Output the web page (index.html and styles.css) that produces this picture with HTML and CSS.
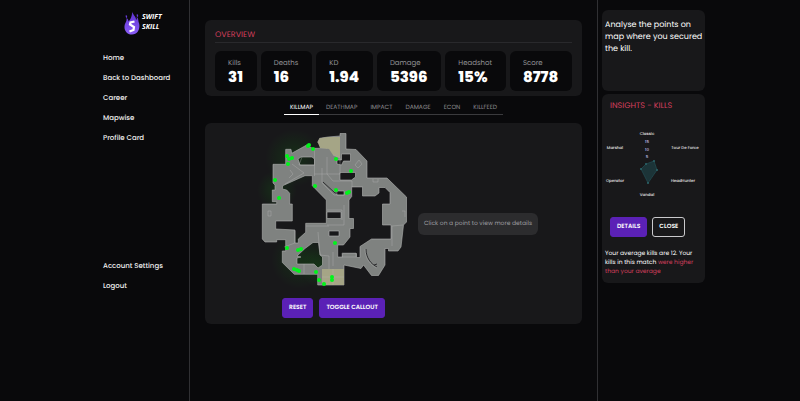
FILE: index.html
```html
<!DOCTYPE html>
<html lang="en">
<head>
    <meta charset="UTF-8">
    <meta name="viewport" content="width=device-width, initial-scale=1.0">
    <title>Swift Skill</title>
    <link rel="stylesheet" href="styles.css">
</head>
<body>
    <!-- Left Navigation Bar -->
    <nav class="left-nav">
        <a href="#" class="logo">
            <svg class="flame" viewBox="0 0 16 24" aria-hidden="true">
                <defs>
                    <linearGradient id="flame-fill" x1="0" y1="0" x2="0" y2="1">
                        <stop offset="0" stop-color="#5b2fd0"/>
                        <stop offset="1" stop-color="#8a5cf6"/>
                    </linearGradient>
                </defs>
                <path fill="url(#flame-fill)" d="M8 0C8 3 12 5 12 9C13 8 13 7 12.500 5.500C15 8 14 10 15 12C16.500 17 14 23.500 8 23.500C2 23.500 -.5 18 .8 13.500C1.500 11 3 10 2.500 7C4 8 4.500 9 4.500 10.500C7 8 8.500 4 8 0ZM2 4C3.500 5 3.500 6 2.500 7C1.500 6 1.500 5 2 4ZM13 3C14.500 4 14.500 5 13.500 6C12.500 5 12.500 4 13 3Z"/>
                <path fill="none" stroke="#fff" stroke-width="2.200" d="M10.500 10.500L6.500 11.500L6 13.500L10 16L9.500 19L5.500 20.500"/>
            </svg>
            <span class="logo-text">SWIFT<br>SKILL</span>
        </a>
        <ul>
            <li><a href="#">Home</a></li>
            <li><a href="#">Back to Dashboard</a></li>
            <li><a href="#">Career</a></li>
            <li><a href="#">Mapwise</a></li>
            <li><a href="#">Profile Card</a></li>
        </ul>
        <ul class="account-links">
            <li><a href="#">Account Settings</a></li>
            <li><a href="#">Logout</a></li>
        </ul>
    </nav>

    <!-- Main Content -->
    <main class="main-content">
        <section class="panel overview">
            <h2>OVERVIEW</h2>
            <div class="stats">
                <div class="stat"><span>Kills</span><strong>31</strong></div>
                <div class="stat"><span>Deaths</span><strong>16</strong></div>
                <div class="stat"><span>KD</span><strong>1.94</strong></div>
                <div class="stat"><span>Damage</span><strong>5396</strong></div>
                <div class="stat"><span>Headshot</span><strong>15%</strong></div>
                <div class="stat"><span>Score</span><strong>8778</strong></div>
            </div>
        </section>

        <div class="tabs">
            <button class="active">KILLMAP</button>
            <button>DEATHMAP</button>
            <button>IMPACT</button>
            <button>DAMAGE</button>
            <button>ECON</button>
            <button>KILLFEED</button>
        </div>

        <section class="panel map-panel">
            <div class="map-column">
                <svg class="map" viewBox="249 129 169 160" role="img" aria-label="Kill map">
                    <defs>
                        <radialGradient id="glow">
                            <stop offset="0" stop-color="#0f0" stop-opacity=".1"/>
                            <stop offset="1" stop-color="#0f0" stop-opacity="0"/>
                        </radialGradient>
                    </defs>
                    <circle cx="294" cy="158" r="29" fill="url(#glow)"/>
                    <circle cx="277" cy="190" r="20" fill="url(#glow)"/>
                    <circle cx="300" cy="260" r="29" fill="url(#glow)"/>
                    <circle cx="322" cy="268" r="21" fill="url(#glow)"/>

                    <!-- floor with cut out walls -->
                    <path class="floor" d="M317.700 142.300L319.700 138.300L328 137L340 136L340 133.500H346V149L356 149.500L367 161V178H387L406.500 197V222L403.500 225L401 247L398 251H388.500V248.500H385V265L378.500 275.500H371.500L363.500 265L361 268.500L344 265V285H317.700V274.300H294.300L282.300 262.500V251H285.700V239.700H276.700V242H265L262.300 239V204H276.700V201.700H272.300V190H275V185L273 183V164.300H285.700V149.300H291L291.700 153.300L306.700 145L312.300 148.300H326.700Z
                        M298 159L301 157H312L314.500 159V165H300Z
                        M282.700 185.700L305 175.700H312.300V185.700L326.300 200V223.300H305.700V232.300L298.300 239V243H295V230L275.700 229V221H292.300V204H289.700V193.300L286.700 190L282.300 189Z
                        M297 256L305 248.500L313 242.500H318.500L320 255L322.500 257V265L318 268L314 264H297V258L301 257Z
                        M341.500 154H350.500V161H343.500L341.500 165L337 164V160H341.500Z
                        M340 172.500H355.500V177L351.500 180H340Z
                        M351.700 186.700H362.500V196H375L379 193V187.500H385L390 192.500V204H382.500V225H391V239H371.500L360 246.500V257.500H356.500V253.500H342.500V257H337.700V245H343.500L350 237V228.500H353.500V218.500H349V200L351.700 196.500Z
                        M327 212H341V218.500H327Z
                        M329 231H339V236H329Z
                        M337 191H344V195H337Z"/>

                    <!-- bomb sites -->
                    <path class="site" d="M317.700 142.300L319.700 138.300L328 137H340V158L333 155L329 149L320 148Z"/>
                    <path class="site" d="M322 269H344V285H322Z"/>

                    <!-- inner lines -->
                    <path class="lines" d="M314.500 148V176M314.500 165H299L302 157M314.500 174H340V158L333 155M322 168V183L334 195H345M327 157V174L333 181H340M285 184L304 173L292 164M340 181L352 181V187L362 187M327 225H344V205M327 210H342V220M306 226H329M295 231V243L284 247M318 232L320 255L329 256V269M304 274V264M333 252V266M322 277H344M333 269V285M268 211H271V216H268ZM290 170L293 174L289 178M355 165L359 160L362 164L358 168ZM373 179V182H378V179M402 211H405V217M403 225L392 226V246M342 253H356V257H342Z"/>
                    <path class="cover" d="M323 182L335 193H342M366 249C366 258 371 264 377 267M374 265L377 264"/>
                    <path class="lines" d="M365 249C365 258 370 265 377 268"/>

                    <g class="kills">
                        <circle cx="308" cy="146" r="2"/>
                        <circle cx="309" cy="145" r="2"/>
                        <circle cx="313" cy="149" r="2"/>
                        <circle cx="287" cy="156" r="2"/>
                        <circle cx="289" cy="159" r="2"/>
                        <circle cx="292" cy="158" r="2"/>
                        <circle cx="288" cy="164" r="2"/>
                        <circle cx="275" cy="180" r="2"/>
                        <circle cx="279" cy="198" r="2"/>
                        <circle cx="315" cy="186" r="2"/>
                        <circle cx="336" cy="159" r="2"/>
                        <circle cx="351" cy="171" r="2"/>
                        <circle cx="336" cy="190" r="2"/>
                        <circle cx="347" cy="193" r="2"/>
                        <circle cx="349" cy="192" r="2"/>
                        <circle cx="335" cy="243" r="2"/>
                        <circle cx="287" cy="248" r="2"/>
                        <circle cx="298" cy="250" r="2"/>
                        <circle cx="301" cy="249" r="2"/>
                        <circle cx="294" cy="269" r="2"/>
                        <circle cx="297" cy="270" r="2"/>
                        <circle cx="299" cy="271" r="2"/>
                        <circle cx="316" cy="272" r="2"/>
                        <circle cx="319" cy="280" r="2"/>
                        <circle cx="324" cy="284" r="2"/>
                        <circle cx="332" cy="277" r="2"/>
                        <circle cx="332" cy="280" r="2"/>
                    </g>
                </svg>
                <div class="map-buttons">
                    <button class="btn">RESET</button>
                    <button class="btn">TOGGLE CALLOUT</button>
                </div>
            </div>
            <p class="hint">Click on a point to view more details</p>
        </section>
    </main>

    <!-- Right Column -->
    <aside class="side">
        <section class="panel note">
            <p>Analyse the points on map where you secured the kill.</p>
        </section>

        <section class="panel insights">
            <h2>INSIGHTS - KILLS</h2>
            <svg class="radar" viewBox="0 0 103 76" role="img" aria-label="Kills by weapon">
                <polygon points="44,43 52,40 55,49 46,62 39,48"/>
                <g class="radar-dots">
                    <circle cx="44" cy="43" r="1"/>
                    <circle cx="52" cy="40" r="1"/>
                    <circle cx="55" cy="49" r="1"/>
                    <circle cx="46" cy="62" r="1"/>
                    <circle cx="39" cy="48" r="1"/>
                </g>
                <g class="ticks">
                    <text x="45" y="22">15</text>
                    <text x="45" y="30">10</text>
                    <text x="45" y="37">5</text>
                </g>
                <g class="weapons">
                    <text x="45" y="14">Classic</text>
                    <text x="83" y="28">Tour De Force</text>
                    <text x="81" y="61">HeadHunter</text>
                    <text x="45" y="75">Vandal</text>
                    <text x="13" y="61">Operator</text>
                    <text x="13" y="28">Marshal</text>
                </g>
            </svg>
            <div class="insight-buttons">
                <button class="btn">DETAILS</button>
                <button class="btn outline">CLOSE</button>
            </div>
            <p class="summary">Your average kills are 12. Your kills in this match <span>were higher than your average</span></p>
        </section>
    </aside>
</body>
</html>
```
FILE: styles.css
```css
/* General styles */
* {
    box-sizing: border-box;
}

body {
    margin: 0;
    padding: 0 95px;
    min-height: 100vh;
    display: grid;
    grid-template-columns: 95px 1fr 108px;
    background: #09090b;
    color: #fff;
    font-family: Poppins, Inter, "Open Sans", sans-serif;
    font-size: 7px;
    text-rendering: geometricPrecision;
}

h2,
p,
ul {
    margin: 0;
    padding: 0;
    font-weight: normal;
}

h2 {
    font-size: 8px;
    line-height: 12px;
    color: #d43f5c;
}

button {
    font-family: inherit;
    text-rendering: inherit;
    cursor: pointer;
}

.panel {
    background: #18181a;
    border-radius: 6px;
}

/* Left navigation */
.left-nav {
    border-right: 1px solid #303033;
    padding: 11px 0 0 8px;
}

.logo {
    display: flex;
    align-items: center;
    gap: 2px;
    margin: 0 0 14px 21px;
    color: #fff;
    text-decoration: none;
}

.flame {
    width: 16px;
    height: 24px;
}

.logo-text {
    font-family: "Open Sans", sans-serif;
    font-size: 7px;
    line-height: 10px;
    font-weight: 700;
    font-style: italic;
}

.left-nav ul {
    list-style: none;
}

.left-nav li {
    line-height: 20px;
}

.left-nav li a {
    color: #f1f1f1;
    text-decoration: none;
    white-space: nowrap;
    font-weight: 500;
}

.account-links {
    margin-top: 108px;
}

/* Main content */
.main-content {
    padding: 20px 15px;
}

.overview {
    padding: 9px 10px 5px;
}

.overview h2 {
    padding-bottom: 1px;
    border-bottom: 1px solid #29292c;
    margin-bottom: 8px;
}

.stats {
    display: flex;
    gap: 4px;
}

.stat {
    flex: 1 1 auto;
    height: 40px;
    padding: 8px 12px 0 13px;
    background: #09090b;
    border-radius: 6px;
}

.stat span {
    display: block;
    font-size: 7px;
    line-height: 10px;
    color: #929296;
}

.stat strong {
    display: block;
    font-size: 15px;
    line-height: 17px;
    font-weight: 800;
}

.tabs {
    display: flex;
    gap: 1px;
    width: fit-content;
    margin: 5px auto 8px;
    border-bottom: 1px solid #3a3a3d;
}

.tabs button {
    padding: 2px 6px 0;
    margin-bottom: -1px;
    background: none;
    border: 0;
    border-bottom: 1px solid transparent;
    color: #8a8a8e;
    font-size: 6px;
    line-height: 11px;
}

.tabs .active {
    color: #fff;
    border-color: #fff;
}

.map-panel {
    display: flex;
    justify-content: center;
    padding: 6px 0;
}

.map-column {
    width: 169px;
}

.map {
    display: block;
    width: 100%;
}

.floor {
    fill: #7f8280;
    fill-rule: evenodd;
    stroke: #b2b4b2;
    stroke-width: .6;
}

.site {
    fill: #a5a586;
}

.lines {
    fill: none;
    stroke: #b9bbb9;
    stroke-width: .5;
    opacity: .7;
}

.cover {
    fill: none;
    stroke: #18181a;
    stroke-width: .8;
}

.kills {
    fill: #00f51a;
}

.map-buttons {
    display: flex;
    justify-content: center;
    gap: 6px;
    margin-top: 9px;
}

.btn {
    height: 20px;
    padding: 1px 6px 0;
    border: 1px solid #5b21b6;
    border-radius: 3px;
    background: #5b21b6;
    color: #fff;
    font-size: 6px;
    font-weight: 600;
    white-space: nowrap;
}

.btn.outline {
    background: none;
    border-color: #c9c9cc;
}

.hint {
    align-self: flex-start;
    width: 120px;
    margin-top: 84px;
    border-radius: 6px;
    background: #2c2c2e;
    color: #9c9ca0;
    font-size: 6px;
    line-height: 22px;
    text-align: center;
    white-space: nowrap;
}

/* Right column */
.side {
    border-left: 1px solid #303033;
    padding: 10px 0 0 4px;
}

.note {
    min-height: 81px;
    padding: 9px 0 9px 3px;
    margin-bottom: 3px;
    font-size: 8px;
    line-height: 12px;
}

.insights {
    padding: 6px 0;
}

.insights h2 {
    padding-left: 8px;
    margin-bottom: 9px;
}

.radar {
    display: block;
    width: 100%;
    margin-bottom: 20px;
}

.radar polygon {
    fill: #1c3438;
    stroke: #24545a;
    stroke-width: .6;
}

.radar-dots {
    fill: #2b666b;
}

.radar text {
    fill: #e6e6e6;
    font-size: 4px;
    font-weight: 500;
    text-anchor: middle;
}

.radar .ticks text {
    fill: #c6c2ea;
}

.insight-buttons {
    display: flex;
    gap: 5px;
    padding-left: 8px;
}

.summary {
    padding: 13px 3px 0;
    font-size: 6px;
    line-height: 9px;
}

.summary span {
    color: #d43f5c;
}
```
